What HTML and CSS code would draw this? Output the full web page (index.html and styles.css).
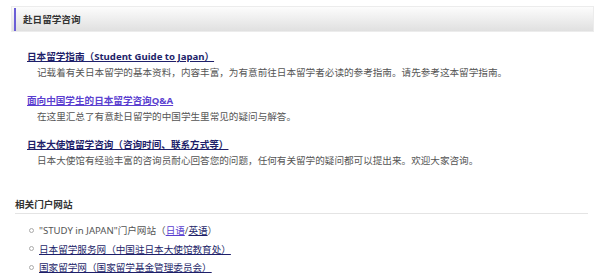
FILE: index.html
```html
<!DOCTYPE html>
<html>
<head>
  <title>赴日留学咨询</title>
  <link rel="stylesheet" href="styles.css">
</head>
<body>
  <div class="page">
    <div class="box-title">
      <span>赴日留学咨询</span>
    </div>

    <div class="guide-list">
      <div class="guide">
        <a href="#" class="dark">日本留学指南（Student Guide to Japan）</a>
        <p>记载着有关日本留学的基本资料，内容丰富，为有意前往日本留学者必读的参考指南。请先参考这本留学指南。</p>
      </div>
      <div class="guide">
        <a href="#" class="light">面向中国学生的日本留学咨询Q&amp;A</a>
        <p>在这里汇总了有意赴日留学的中国学生里常见的疑问与解答。</p>
      </div>
      <div class="guide">
        <a href="#" class="dark">日本大使馆留学咨询（咨询时间、联系方式等）</a>
        <p>日本大使馆有经验丰富的咨询员耐心回答您的问题，任何有关留学的疑问都可以提出来。欢迎大家咨询。</p>
      </div>
    </div>

    <div class="sub-title">相关门户网站</div>
    <ul class="portal-list">
      <li>"STUDY in JAPAN"门户网站（<a href="#" class="light">日语</a>/<a href="#" class="dark">英语</a>）</li>
      <li><a href="#" class="dark">日本留学服务网（中国驻日本大使馆教育处）</a></li>
      <li><a href="#" class="dark">国家留学网（国家留学基金管理委员会）</a></li>
    </ul>
  </div>
</body>
</html>
```

FILE: styles.css
```css
body {
  margin: 0;
  padding: 0;
  background-color: #fff;
  font-family: "Noto Sans", "Noto Sans CJK SC", sans-serif;
  font-size: 9.6px;
  color: #555;
}

.page {
  padding: 6px 6px 0 11px;
}

.box-title {
  height: 24px;
  border: 1px solid #ececec;
  background: linear-gradient(#fcfcfc, #e0e0e0);
  display: flex;
  align-items: center;
  padding-left: 2px;
}

.box-title span {
  border-left: 2px solid #6b5fd6;
  padding-left: 7px;
  line-height: 23px;
  font-weight: bold;
  color: #333;
}

.guide-list {
  margin-top: 17px;
  padding-left: 16px;
}

.guide {
  margin-bottom: 12px;
}

.guide a {
  display: inline-block;
  line-height: 16px;
  font-weight: bold;
}

.guide p {
  margin: 0;
  padding-left: 10px;
  line-height: 16px;
}

a.dark {
  color: #1e1f6a;
}

a.light {
  color: #5b3fd0;
}

.sub-title {
  margin: 28px 6px 0 4px;
  line-height: 16px;
  font-weight: bold;
  color: #333;
  border-bottom: 1px solid #e4e4e4;
}

.portal-list {
  list-style: none;
  margin: 8px 0 0 0;
  padding-left: 18px;
}

.portal-list li {
  line-height: 18.5px;
}

.portal-list li::before {
  content: "";
  display: inline-block;
  width: 3px;
  height: 3px;
  border: 1px solid #aaa;
  border-radius: 50%;
  margin-right: 5px;
  vertical-align: middle;
  position: relative;
  top: -1px;
}
```
